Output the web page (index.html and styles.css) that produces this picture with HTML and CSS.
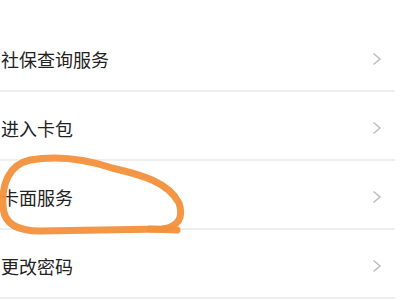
FILE: index.html
```html
<!DOCTYPE html>
<html lang="zh-CN">
<head>
<meta charset="utf-8">
<title>卡服务</title>
<link rel="stylesheet" href="styles.css">
</head>
<body>
<div class="page">
  <ul class="menu">
    <li class="item"><span class="label">社保查询服务</span><svg class="chev" viewBox="0 0 10 14"><path d="M1.5 1.5 L8 7 L1.5 12.5"/></svg></li>
    <li class="item"><span class="label">进入卡包</span><svg class="chev" viewBox="0 0 10 14"><path d="M1.5 1.5 L8 7 L1.5 12.5"/></svg></li>
    <li class="item"><span class="label">卡面服务</span><svg class="chev" viewBox="0 0 10 14"><path d="M1.5 1.5 L8 7 L1.5 12.5"/></svg></li>
    <li class="item"><span class="label">更改密码</span><svg class="chev" viewBox="0 0 10 14"><path d="M1.5 1.5 L8 7 L1.5 12.5"/></svg></li>
  </ul>
  <svg class="mark" viewBox="0 0 400 300" width="400" height="300">
    <path d="M30 160 C55 156, 85 159, 112 168 C142 175, 168 182, 179 203 C184 218, 178 227, 162 229 L40 231 C15 231, 3 222, 3 205 C2 185, 8 165, 30 160"/>
    <path d="M150 229 L177 230"/>
  </svg>
</div>
</body>
</html>
```

FILE: styles.css
```css
html, body {
  margin: 0;
  padding: 0;
  background: #ffffff;
}
.page {
  position: relative;
  width: 400px;
  height: 300px;
  overflow: hidden;
}
.menu {
  list-style: none;
  margin: 0;
  padding: 23px 5px 0 0;
}
.item {
  display: flex;
  align-items: center;
  justify-content: space-between;
  box-sizing: border-box;
  height: 69px;
  padding: 4px 13px 0 1px;
  border-bottom: 2px solid #eeeeee;
}
.label {
  font-family: "Noto Sans CJK SC", "Noto Sans", sans-serif;
  font-size: 18px;
  color: #222222;
  line-height: 24px;
}
.chev {
  width: 10px;
  height: 14px;
}
.chev path {
  fill: none;
  stroke: #bdbdbd;
  stroke-width: 1.5;
}
.mark {
  position: absolute;
  left: 0;
  top: 0;
  pointer-events: none;
}
.mark path {
  fill: none;
  stroke: #f2903c;
  stroke-width: 7;
  stroke-linecap: round;
  stroke-linejoin: round;
  opacity: 0.95;
}
```
